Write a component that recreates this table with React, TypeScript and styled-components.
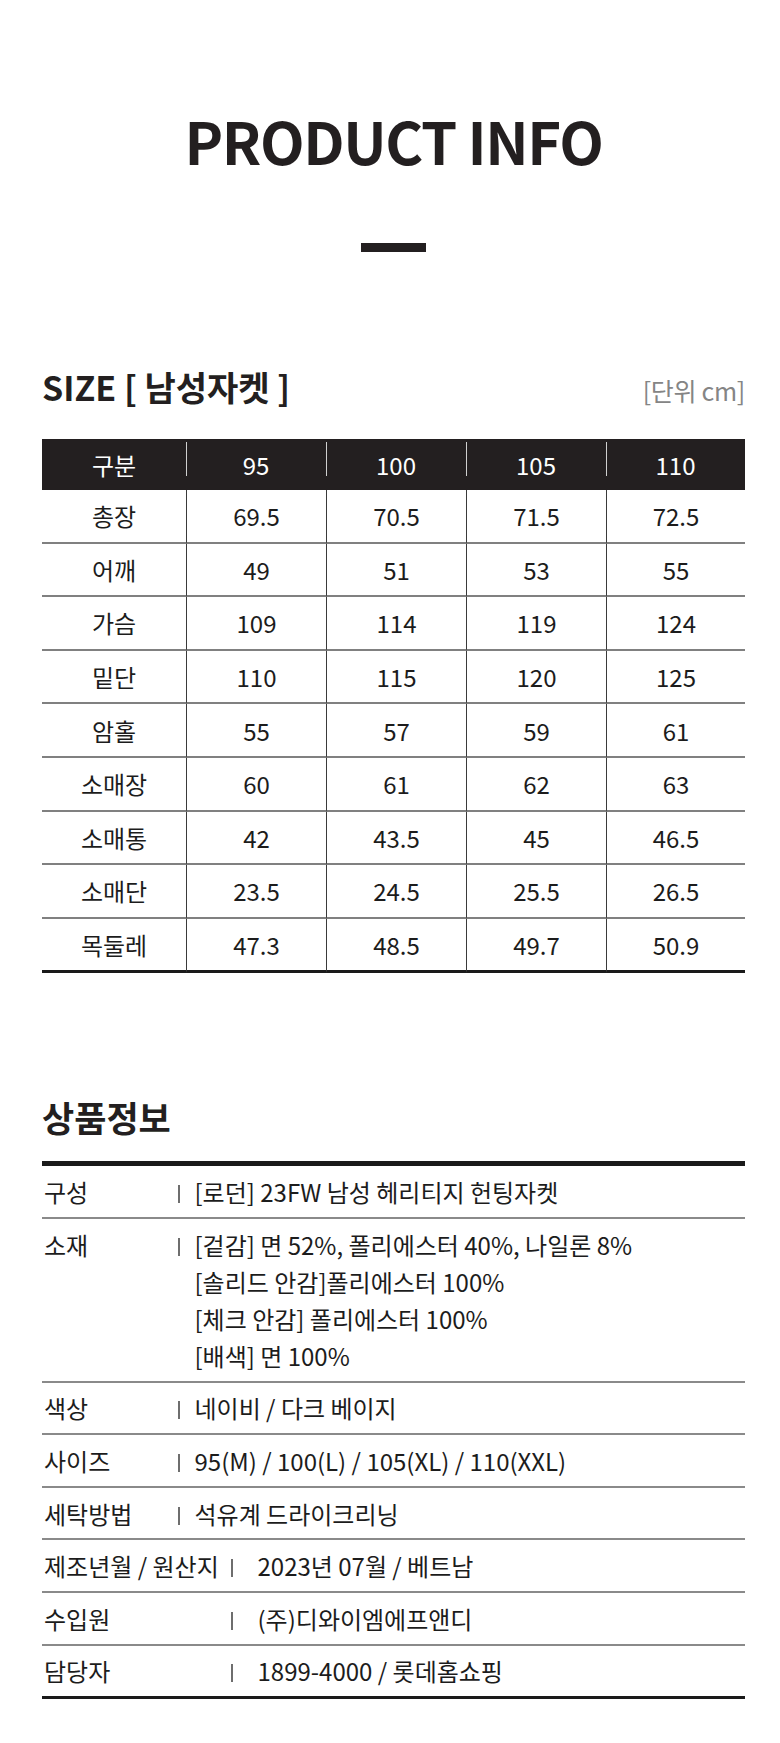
import React from "react";
import styled, { createGlobalStyle } from "styled-components";

const GlobalStyle = createGlobalStyle`
  html, body {
    margin: 0;
    padding: 0;
    background: #ffffff;
  }
  body {
    font-family: "Noto Sans CJK KR", "Noto Sans", sans-serif;
    color: #1c1c1c;
    -webkit-font-smoothing: antialiased;
  }
`;

const Page = styled.main`
  width: 703px;
  padding: 111px 0 40px 42px;
  box-sizing: content-box;
`;

const Title = styled.h1`
  margin: 0;
  font-size: 58px;
  line-height: 58px;
  font-weight: 700;
  text-align: center;
  color: #231f20;
  letter-spacing: -1.4px;
`;

const Dash = styled.div`
  width: 65px;
  height: 9px;
  margin: 74px auto 0;
  background: #231f20;
`;

const SizeHeader = styled.div`
  display: flex;
  justify-content: space-between;
  align-items: baseline;
  margin-top: 118px;
`;

const SectionTitle = styled.h2`
  margin: 0;
  font-size: 34px;
  line-height: 34px;
  font-weight: 700;
  color: #231f20;
  letter-spacing: 0;
`;

const Unit = styled.span`
  font-size: 25px;
  line-height: 34px;
  font-weight: 400;
  color: #858585;
  letter-spacing: -0.3px;
`;

const SizeGrid = styled.div`
  display: grid;
  grid-template-columns: 144px 140px 140px 140px 139px;
  margin-top: 32px;
`;

const HeadCell = styled.div<{ $divider: boolean }>`
  height: 51px;
  display: flex;
  align-items: center;
  justify-content: center;
  background-color: #231f20;
  background-image: ${(p) =>
    p.$divider ? "linear-gradient(#d0d0d0, #d0d0d0)" : "none"};
  background-repeat: no-repeat;
  background-size: 1px 34px;
  background-position: 0 3px;
  color: #ffffff;
  font-size: 24px;
  font-weight: 400;
`;

const BodyCell = styled.div<{ $divider: boolean; $last: boolean }>`
  box-sizing: border-box;
  height: ${(p) => (p.$last ? "54.6px" : "53.6px")};
  display: flex;
  align-items: center;
  justify-content: center;
  border-left: ${(p) => (p.$divider ? "1px solid #3a3a3a" : "none")};
  border-bottom: ${(p) => (p.$last ? "3px solid #1a1a1a" : "2px solid #808080")};
  font-size: 24px;
  font-weight: 400;
  color: #1c1c1c;
`;

const InfoTitle = styled.h2`
  margin: 126px 0 0;
  font-size: 35px;
  line-height: 35px;
  font-weight: 700;
  color: #231f20;
`;

const InfoTable = styled.div`
  margin-top: 27px;
  border-top: 5px solid #1a1a1a;
`;

const InfoRow = styled.div<{ $last: boolean }>`
  display: flex;
  align-items: flex-start;
  padding: 6.8px 0;
  border-bottom: ${(p) => (p.$last ? "3px solid #1a1a1a" : "2px solid #8a8a8a")};
  font-size: 24px;
  line-height: 37px;
  color: #1c1c1c;
`;

const Label = styled.div<{ $wide: boolean }>`
  flex: none;
  width: ${(p) => (p.$wide ? "187px" : "134px")};
  padding-left: 2px;
  white-space: nowrap;
`;

const Bar = styled.span`
  flex: none;
  width: 1.5px;
  height: 18px;
  margin-top: 12px;
  background: #6e6e6e;
`;

const Value = styled.div<{ $wide: boolean }>`
  margin-left: ${(p) => (p.$wide ? "25px" : "15px")};
  white-space: nowrap;
`;

const sizes = ["95", "100", "105", "110"];

const rows: [string, string[]][] = [
  ["총장", ["69.5", "70.5", "71.5", "72.5"]],
  ["어깨", ["49", "51", "53", "55"]],
  ["가슴", ["109", "114", "119", "124"]],
  ["밑단", ["110", "115", "120", "125"]],
  ["암홀", ["55", "57", "59", "61"]],
  ["소매장", ["60", "61", "62", "63"]],
  ["소매통", ["42", "43.5", "45", "46.5"]],
  ["소매단", ["23.5", "24.5", "25.5", "26.5"]],
  ["목둘레", ["47.3", "48.5", "49.7", "50.9"]],
];

const info: { label: string; lines: string[]; wide?: boolean }[] = [
  { label: "구성", lines: ["[로던] 23FW 남성 헤리티지 헌팅자켓"] },
  {
    label: "소재",
    lines: [
      "[겉감] 면 52%, 폴리에스터 40%, 나일론 8%",
      "[솔리드 안감]폴리에스터 100%",
      "[체크 안감] 폴리에스터 100%",
      "[배색] 면 100%",
    ],
  },
  { label: "색상", lines: ["네이비 / 다크 베이지"] },
  { label: "사이즈", lines: ["95(M) / 100(L) / 105(XL) / 110(XXL)"] },
  { label: "세탁방법", lines: ["석유계 드라이크리닝"] },
  { label: "제조년월 / 원산지", lines: ["2023년 07월 / 베트남"], wide: true },
  { label: "수입원", lines: ["(주)디와이엠에프앤디"], wide: true },
  { label: "담당자", lines: ["1899-4000 / 롯데홈쇼핑"], wide: true },
];

export default function App() {
  return (
    <>
      <GlobalStyle />
      <Page>
        <Title>PRODUCT INFO</Title>
        <Dash />

        <SizeHeader>
          <SectionTitle>SIZE [ 남성자켓 ]</SectionTitle>
          <Unit>[단위 cm]</Unit>
        </SizeHeader>

        <SizeGrid>
          <HeadCell $divider={false}>구분</HeadCell>
          {sizes.map((s) => (
            <HeadCell key={s} $divider={true}>
              {s}
            </HeadCell>
          ))}
          {rows.map(([label, vals], ri) => (
            <React.Fragment key={label}>
              <BodyCell $divider={false} $last={ri === rows.length - 1}>
                {label}
              </BodyCell>
              {vals.map((v, vi) => (
                <BodyCell key={vi} $divider={true} $last={ri === rows.length - 1}>
                  {v}
                </BodyCell>
              ))}
            </React.Fragment>
          ))}
        </SizeGrid>

        <InfoTitle>상품정보</InfoTitle>
        <InfoTable>
          {info.map((row, i) => (
            <InfoRow key={row.label} $last={i === info.length - 1}>
              <Label $wide={!!row.wide}>{row.label}</Label>
              <Bar />
              <Value $wide={!!row.wide}>
                {row.lines.map((l) => (
                  <div key={l}>{l}</div>
                ))}
              </Value>
            </InfoRow>
          ))}
        </InfoTable>
      </Page>
    </>
  );
}
